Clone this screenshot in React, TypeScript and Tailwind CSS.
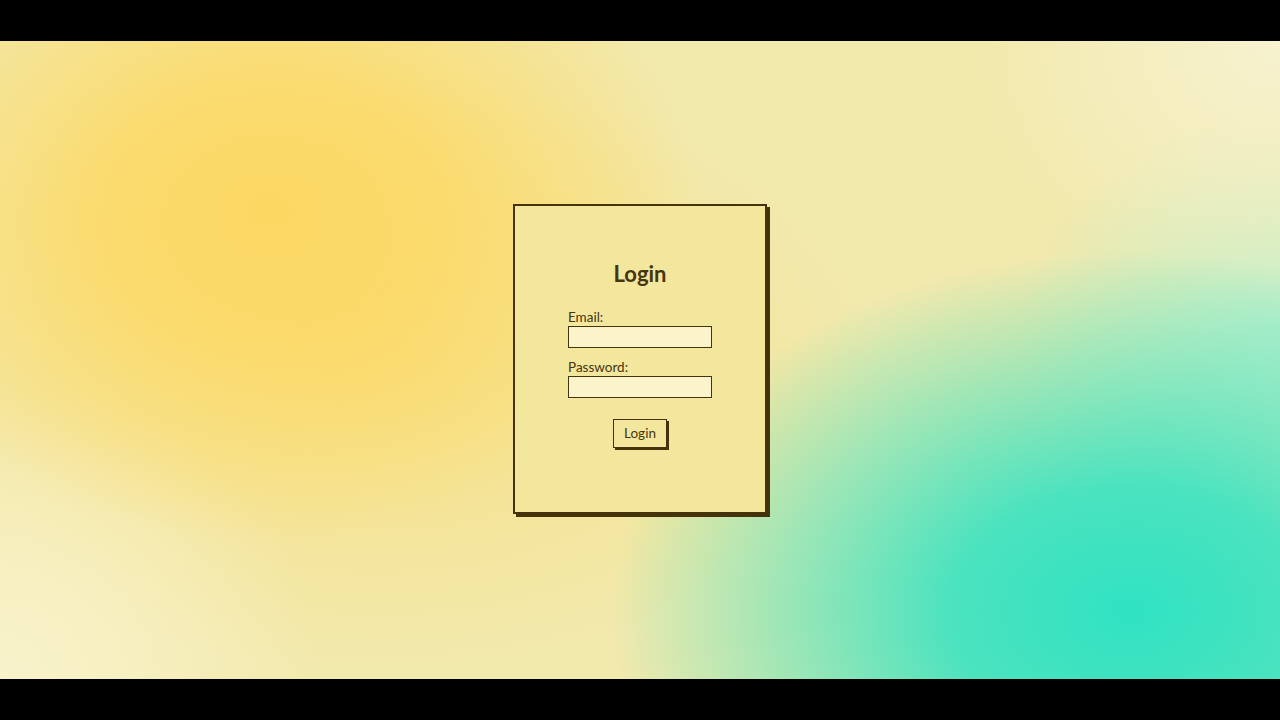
import { useState } from 'react'

export default function App() {
  const [email, setEmail] = useState('')
  const [password, setPassword] = useState('')

  return (
    <div className="min-h-screen bg-black flex flex-col font-['Lato','Noto_Sans',sans-serif] text-[#463510]">
      <div className="h-[41px]" />
      <main className="h-[638px] flex justify-center items-start pt-[163px] bg-[#f2e9ad] bg-[radial-gradient(ellipse_430px_330px_at_270px_170px,#fcd862_0%,rgba(252,216,98,0.8)_40%,rgba(252,216,98,0)_100%),radial-gradient(ellipse_520px_360px_at_1130px_570px,#2fe2c2_0%,rgba(47,226,194,0.85)_35%,rgba(47,226,194,0)_100%),radial-gradient(ellipse_300px_260px_at_1280px_0px,#f7f2d0_0%,rgba(247,242,208,0)_100%),radial-gradient(ellipse_320px_300px_at_0px_638px,#f9f3cc_0%,rgba(249,243,204,0)_100%),radial-gradient(ellipse_260px_220px_at_1280px_290px,rgba(190,240,205,0.95)_0%,rgba(190,240,205,0)_100%),radial-gradient(ellipse_500px_300px_at_380px_330px,rgba(250,218,110,0.6)_0%,rgba(250,218,110,0)_100%)]">
        <div className="w-[254px] h-[310px] bg-[#f3e79e] border-2 border-[#45330b] shadow-[3px_3px_0_#45330b] flex flex-col items-center pt-[54px]">
          <h1 className="text-[22px] leading-[28px] font-bold">Login</h1>
          <form className="w-[144px] mt-[20px] flex flex-col" onSubmit={(e) => e.preventDefault()}>
            <label className="text-[13.5px] leading-[18px]">Email:</label>
            <input
              type="email"
              value={email}
              onChange={(e) => setEmail(e.target.value)}
              className="h-[22px] w-full bg-[#fbf3c9] border-[1.5px] border-[#45330b] outline-none px-1 text-[12px]"
            />
            <label className="text-[13.5px] leading-[18px] mt-[10px]">Password:</label>
            <input
              type="password"
              value={password}
              onChange={(e) => setPassword(e.target.value)}
              className="h-[22px] w-full bg-[#fbf3c9] border-[1.5px] border-[#45330b] outline-none px-1 text-[12px]"
            />
            <button
              type="submit"
              className="self-center mt-[21px] w-[54px] h-[29px] bg-[#f3e79e] border-[1.5px] border-[#45330b] shadow-[2px_2px_0_#45330b] text-[13.5px]"
            >
              Login
            </button>
          </form>
        </div>
      </main>
      <div className="flex-1 min-h-[41px]" />
    </div>
  )
}
